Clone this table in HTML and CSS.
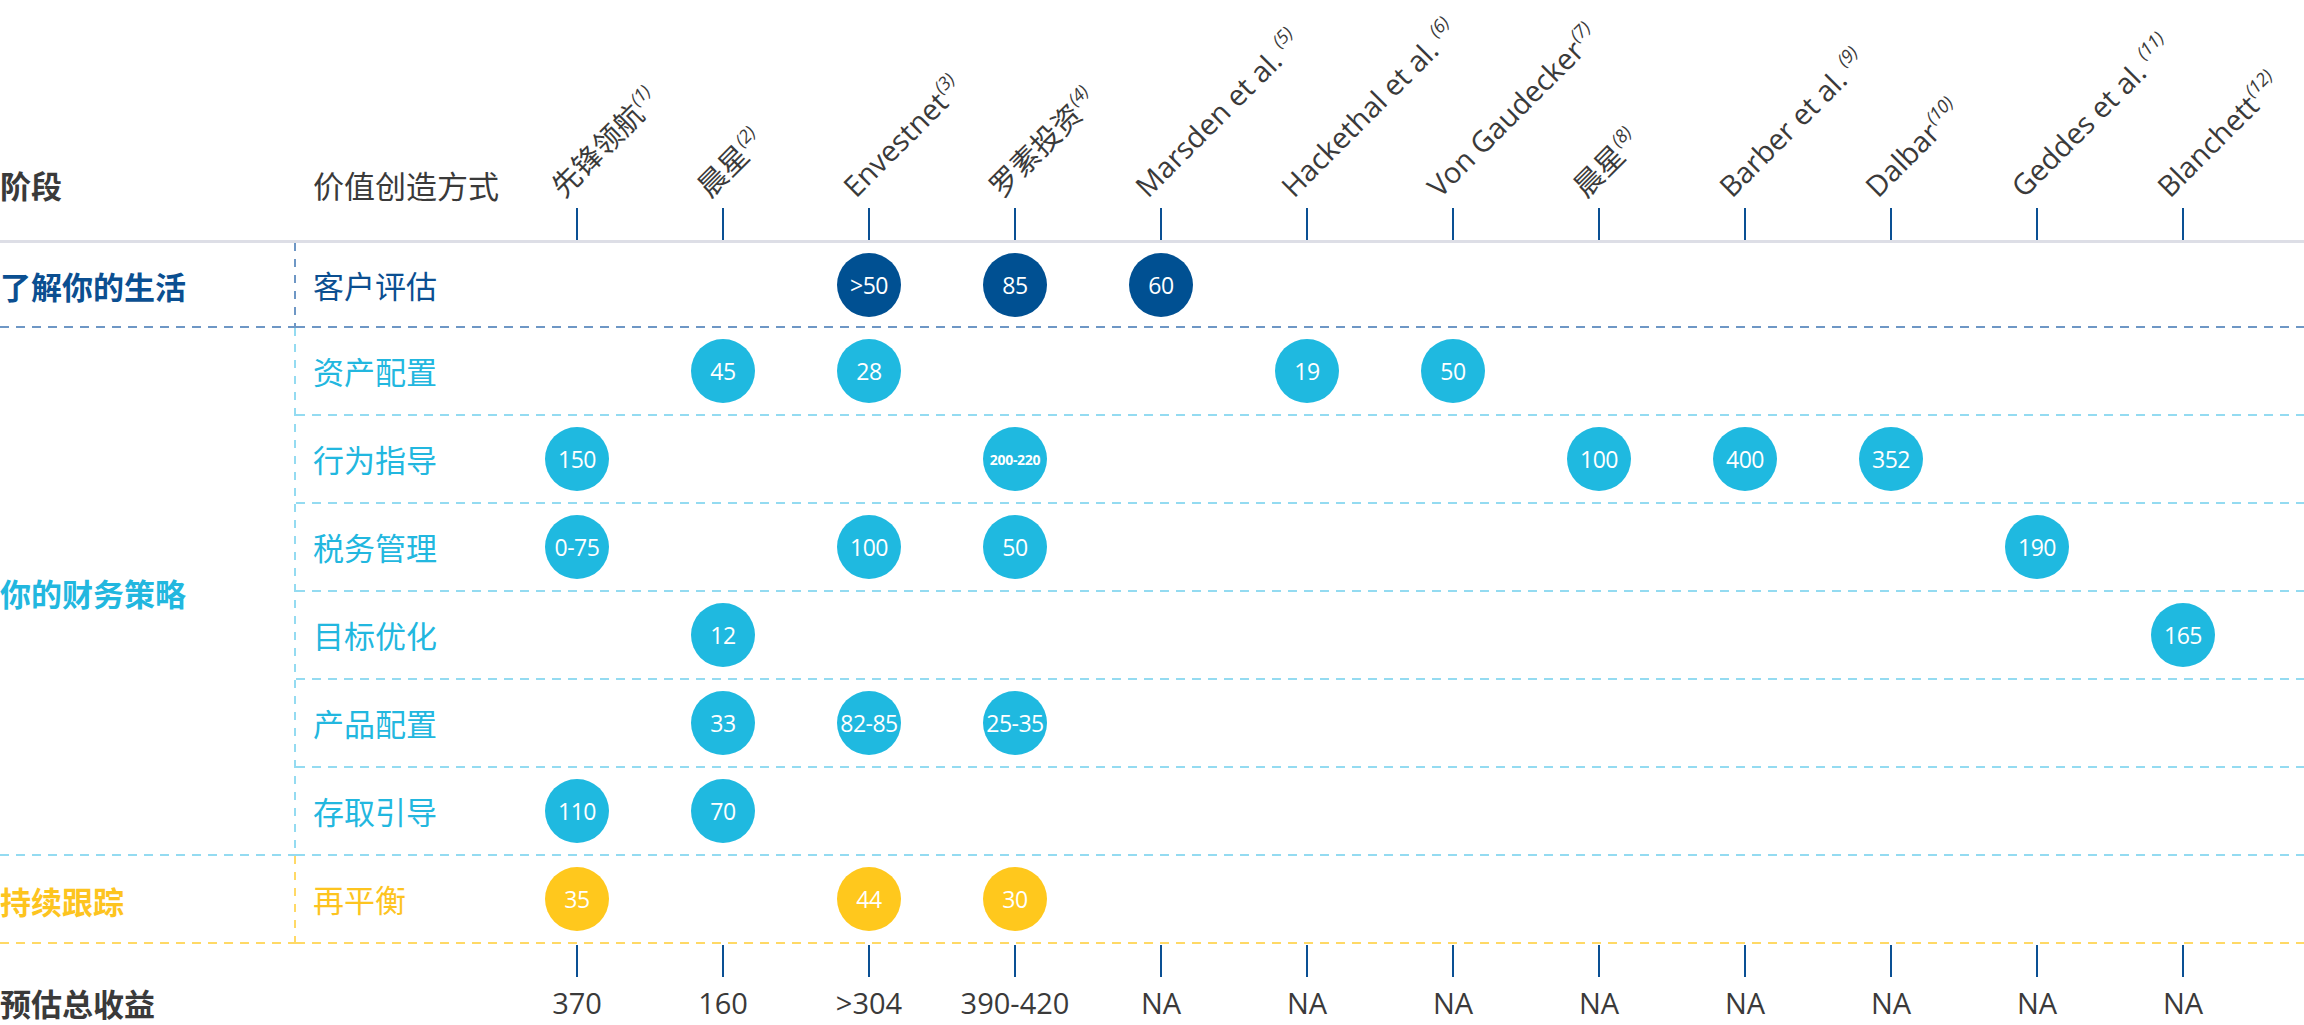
FILE: index.html
```html
<!DOCTYPE html>
<html lang="zh-CN">
<head>
<meta charset="utf-8">
<title>价值创造方式</title>
<link rel="stylesheet" href="styles.css">
</head>
<body>
<div class="chart">
  <div class="head">
    <div class="head-stage">阶段</div>
    <div class="head-method">价值创造方式</div>
    <div class="col-head"><div class="col-label">先锋领航<sup>(1)</sup></div><div class="tick"></div></div>
    <div class="col-head"><div class="col-label">晨星<sup>(2)</sup></div><div class="tick"></div></div>
    <div class="col-head"><div class="col-label">Envestnet<sup>(3)</sup></div><div class="tick"></div></div>
    <div class="col-head"><div class="col-label">罗素投资<sup>(4)</sup></div><div class="tick"></div></div>
    <div class="col-head"><div class="col-label">Marsden et al.<sup class="gap">(5)</sup></div><div class="tick"></div></div>
    <div class="col-head"><div class="col-label">Hackethal et al.<sup class="gap">(6)</sup></div><div class="tick"></div></div>
    <div class="col-head"><div class="col-label">Von Gaudecker<sup>(7)</sup></div><div class="tick"></div></div>
    <div class="col-head"><div class="col-label">晨星<sup>(8)</sup></div><div class="tick"></div></div>
    <div class="col-head"><div class="col-label">Barber et al.<sup class="gap">(9)</sup></div><div class="tick"></div></div>
    <div class="col-head"><div class="col-label">Dalbar<sup>(10)</sup></div><div class="tick"></div></div>
    <div class="col-head"><div class="col-label">Geddes et al.<sup class="gap">(11)</sup></div><div class="tick"></div></div>
    <div class="col-head"><div class="col-label">Blanchett<sup>(12)</sup></div><div class="tick"></div></div>
  </div>

  <div class="sec sec-dark">
    <div class="stage">了解你的生活</div>
    <div class="rows">
      <div class="row">
        <div class="method">客户评估</div>
        <div class="dot c3">&gt;50</div>
        <div class="dot c4">85</div>
        <div class="dot c5">60</div>
      </div>
    </div>
  </div>

  <div class="sec sec-light">
    <div class="stage">你的财务策略</div>
    <div class="rows">
      <div class="row">
        <div class="method">资产配置</div>
        <div class="dot c2">45</div>
        <div class="dot c3">28</div>
        <div class="dot c6">19</div>
        <div class="dot c7">50</div>
      </div>
      <div class="row">
        <div class="method">行为指导</div>
        <div class="dot c1">150</div>
        <div class="dot c4 dot-small">200-220</div>
        <div class="dot c8">100</div>
        <div class="dot c9">400</div>
        <div class="dot c10">352</div>
      </div>
      <div class="row">
        <div class="method">税务管理</div>
        <div class="dot c1">0-75</div>
        <div class="dot c3">100</div>
        <div class="dot c4">50</div>
        <div class="dot c11">190</div>
      </div>
      <div class="row">
        <div class="method">目标优化</div>
        <div class="dot c2">12</div>
        <div class="dot c12">165</div>
      </div>
      <div class="row">
        <div class="method">产品配置</div>
        <div class="dot c2">33</div>
        <div class="dot c3">82-85</div>
        <div class="dot c4">25-35</div>
      </div>
      <div class="row">
        <div class="method">存取引导</div>
        <div class="dot c1">110</div>
        <div class="dot c2">70</div>
      </div>
    </div>
  </div>

  <div class="sec sec-yellow">
    <div class="stage">持续跟踪</div>
    <div class="rows">
      <div class="row">
        <div class="method">再平衡</div>
        <div class="dot c1">35</div>
        <div class="dot c3">44</div>
        <div class="dot c4">30</div>
      </div>
    </div>
  </div>

  <div class="foot">
    <div class="foot-stage">预估总收益</div>
    <div class="foot-cell c1"><div class="tick"></div><div class="foot-val">370</div></div>
    <div class="foot-cell c2"><div class="tick"></div><div class="foot-val">160</div></div>
    <div class="foot-cell c3"><div class="tick"></div><div class="foot-val">&gt;304</div></div>
    <div class="foot-cell c4"><div class="tick"></div><div class="foot-val">390-420</div></div>
    <div class="foot-cell c5"><div class="tick"></div><div class="foot-val">NA</div></div>
    <div class="foot-cell c6"><div class="tick"></div><div class="foot-val">NA</div></div>
    <div class="foot-cell c7"><div class="tick"></div><div class="foot-val">NA</div></div>
    <div class="foot-cell c8"><div class="tick"></div><div class="foot-val">NA</div></div>
    <div class="foot-cell c9"><div class="tick"></div><div class="foot-val">NA</div></div>
    <div class="foot-cell c10"><div class="tick"></div><div class="foot-val">NA</div></div>
    <div class="foot-cell c11"><div class="tick"></div><div class="foot-val">NA</div></div>
    <div class="foot-cell c12"><div class="tick"></div><div class="foot-val">NA</div></div>
  </div>
</div>
</body>
</html>
```

FILE: styles.css
```css
* { box-sizing: border-box; }
html, body { margin: 0; padding: 0; background: #ffffff; }
body {
  width: 2304px;
  height: 1025px;
  overflow: hidden;
  font-family: "Open Sans", "Noto Sans CJK SC", sans-serif;
  color: #3a3a3a;
}

.chart { width: 2304px; }

/* ---------- header ---------- */
.head {
  display: grid;
  grid-template-columns: 296px 208px repeat(12, 146px) 1fr;
  height: 243px;
  border-bottom: 3px solid #dddee6;
}
.head-stage, .head-method {
  align-self: end;
  margin-bottom: 35px;
  line-height: 40px;
  font-size: 31px;
  font-family: "Noto Sans CJK SC", sans-serif;
  color: #3a3a3a;
}
.head-stage { font-weight: 700; }
.head-method { padding-left: 17px; font-weight: 400; }

.col-head {
  position: relative;
  display: flex;
  justify-content: center;
  align-items: flex-end;
}
.tick {
  width: 2px;
  height: 32px;
  background: #0a5094;
}
.col-label {
  position: absolute;
  left: calc(50% - 11px);
  bottom: 39px;
  transform-origin: 0 100%;
  transform: rotate(-45deg);
  white-space: nowrap;
  font-family: "Open Sans", "Noto Sans CJK SC", sans-serif;
  font-size: 29px;
  line-height: 29px;
  color: #3a3a3a;
}
.col-label sup {
  font-size: 18px;
  line-height: 0;
  font-style: italic;
  vertical-align: 13px;
  margin-left: 1px;
}
.col-label sup.gap { margin-left: 7px; }

/* ---------- sections ---------- */
.sec { display: flex; }
.stage {
  width: 296px;
  flex: none;
  display: flex;
  align-items: center;
  font-family: "Noto Sans CJK SC", sans-serif;
  font-weight: 700;
  font-size: 31px;
  background-repeat: repeat-y, repeat-x;
  background-position: right top, left bottom;
  background-size: 2px 16px, 16px 2px;
}
.rows { flex: 1; display: flex; flex-direction: column; }
.row {
  display: grid;
  grid-template-columns: 208px repeat(12, 146px) 1fr;
  align-items: center;
  height: 88px;
  padding-bottom: 2px;
  background-repeat: repeat-x;
  background-position: left bottom;
  background-size: 16px 2px;
}
.method {
  grid-column: 1;
  padding-left: 17px;
  font-family: "Noto Sans CJK SC", sans-serif;
  font-size: 31px;
  font-weight: 400;
  line-height: 40px;
}

.sec-dark { color: #0b4f91; }
.sec-dark .row { height: 85px; }
.sec-dark .stage {
  background-image:
    linear-gradient(to bottom, #6e97c5 50%, transparent 50%),
    linear-gradient(to right, #6e97c5 55%, transparent 55%);
}
.sec-dark .row { background-image: linear-gradient(to right, #6e97c5 55%, transparent 55%); }
.sec-dark .dot { background: #005092; }

.sec-light { color: #22b7df; }
.sec-light .stage {
  background-image:
    linear-gradient(to bottom, #94dbf1 50%, transparent 50%),
    linear-gradient(to right, #94dbf1 55%, transparent 55%);
}
.sec-light .row { background-image: linear-gradient(to right, #94dbf1 55%, transparent 55%); }
.sec-light .dot { background: #1fb9e0; }

.sec-yellow { color: #fdc41f; }
.sec-yellow .stage {
  background-image:
    linear-gradient(to bottom, #ffd966 50%, transparent 50%),
    linear-gradient(to right, #ffd966 55%, transparent 55%);
}
.sec-yellow .row { background-image: linear-gradient(to right, #ffd966 55%, transparent 55%); }
.sec-yellow .dot { background: #ffc81d; }

/* ---------- dots ---------- */
.dot {
  width: 64px;
  height: 64px;
  border-radius: 50%;
  justify-self: center;
  display: flex;
  align-items: center;
  justify-content: center;
  color: #ffffff;
  font-family: "Open Sans", sans-serif;
  font-size: 23px;
  letter-spacing: -0.5px;
}
.dot-small { font-size: 14px; font-weight: 700; letter-spacing: -0.3px; }

.c1 { grid-column: 2; }
.c2 { grid-column: 3; }
.c3 { grid-column: 4; }
.c4 { grid-column: 5; }
.c5 { grid-column: 6; }
.c6 { grid-column: 7; }
.c7 { grid-column: 8; }
.c8 { grid-column: 9; }
.c9 { grid-column: 10; }
.c10 { grid-column: 11; }
.c11 { grid-column: 12; }
.c12 { grid-column: 13; }

/* ---------- footer ---------- */
.foot {
  display: grid;
  grid-template-columns: 296px 208px repeat(12, 146px) 1fr;
  height: 81px;
}
.foot-stage {
  grid-column: 1 / span 2;
  padding-top: 39px;
  line-height: 40px;
  font-family: "Noto Sans CJK SC", sans-serif;
  font-weight: 700;
  font-size: 31px;
  color: #3a3a3a;
}
.foot .c1 { grid-column: 3; }
.foot .c2 { grid-column: 4; }
.foot .c3 { grid-column: 5; }
.foot .c4 { grid-column: 6; }
.foot .c5 { grid-column: 7; }
.foot .c6 { grid-column: 8; }
.foot .c7 { grid-column: 9; }
.foot .c8 { grid-column: 10; }
.foot .c9 { grid-column: 11; }
.foot .c10 { grid-column: 12; }
.foot .c11 { grid-column: 13; }
.foot .c12 { grid-column: 14; }
.foot-cell {
  display: flex;
  flex-direction: column;
  align-items: center;
  padding-top: 1px;
}
.foot-val {
  margin-top: 8px;
  font-size: 29px;
  line-height: 35px;
  color: #3a3a3a;
  white-space: nowrap;
}
```
